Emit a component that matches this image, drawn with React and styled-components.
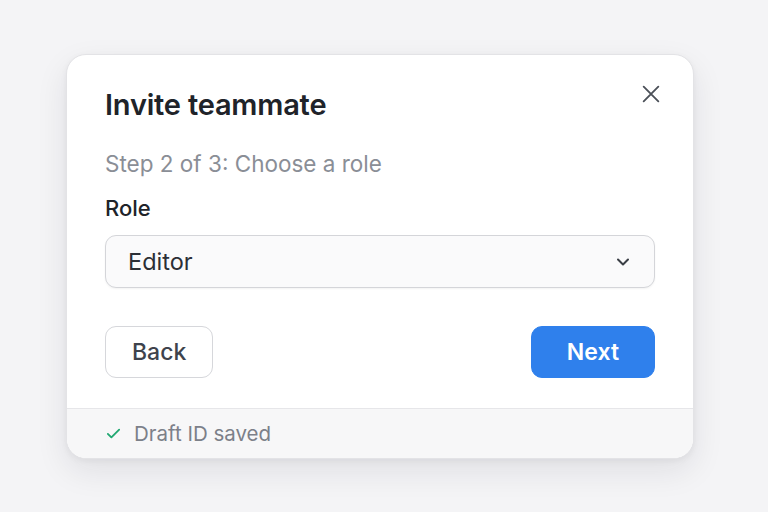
import styled, { createGlobalStyle } from "styled-components";

const GlobalStyle = createGlobalStyle`
  html, body {
    margin: 0;
    padding: 0;
    background: #f4f4f6;
    font-family: Inter, "Noto Sans", sans-serif;
  }
  * { box-sizing: border-box; }
`;

const Page = styled.div`
  width: 768px;
  height: 512px;
  display: flex;
  justify-content: flex-start;
  padding: 54px 0 0 66px;
`;

const Card = styled.div`
  width: 628px;
  height: 405px;
  background: #ffffff;
  border: 1px solid #e3e3e6;
  border-radius: 20px;
  box-shadow: 0 12px 32px rgba(20, 20, 40, 0.09), 0 2px 6px rgba(20, 20, 40, 0.05);
  display: flex;
  flex-direction: column;
  overflow: hidden;
`;

const Body = styled.div`
  flex: 1;
  padding: 31px 38px 0 38px;
  display: flex;
  flex-direction: column;
`;

const Header = styled.div`
  display: flex;
  justify-content: space-between;
  align-items: flex-start;
`;

const Title = styled.h1`
  margin: 0;
  font-size: 29px;
  font-weight: 600;
  color: #202329;
  letter-spacing: -0.2px;
  line-height: 38px;
`;

const CloseButton = styled.button`
  border: none;
  background: none;
  padding: 0;
  margin: -6px -10px 0 0;
  width: 28px;
  height: 28px;
  display: flex;
  align-items: center;
  justify-content: center;
  color: #4b5058;
  cursor: pointer;
`;

const Subtitle = styled.p`
  margin: 25px 0 0 0;
  font-size: 22.5px;
  color: #8a8e96;
  line-height: 30px;
`;

const Label = styled.div`
  margin-top: 14px;
  font-size: 22px;
  font-weight: 500;
  color: #202329;
  line-height: 30px;
`;

const Select = styled.div`
  margin-top: 12px;
  height: 53px;
  border: 1px solid #d4d5d9;
  border-radius: 11px;
  background: #fafafb;
  box-shadow: 0 1px 2px rgba(0, 0, 0, 0.05);
  display: flex;
  align-items: center;
  justify-content: space-between;
  padding: 0 21px 0 22px;
  font-size: 23.5px;
  color: #2b2f36;
`;

const Actions = styled.div`
  margin-top: 38px;
  display: flex;
  justify-content: space-between;
`;

const Button = styled.button`
  height: 52px;
  padding: 0 ${(p) => (p.$primary ? "35px" : "26px")};
  border-radius: 11px;
  font-family: Inter, "Noto Sans", sans-serif;
  font-size: 23px;
  font-weight: ${(p) => (p.$primary ? 600 : 500)};
  color: ${(p) => (p.$primary ? "#ffffff" : "#3e434c")};
  background: ${(p) => (p.$primary ? "#2f80ec" : "#ffffff")};
  border: 1px solid ${(p) => (p.$primary ? "#2f80ec" : "#d6d7db")};
  cursor: pointer;
`;

const Footer = styled.div`
  height: 50px;
  border-top: 1px solid #e6e6e9;
  background: #f7f7f8;
  display: flex;
  align-items: center;
  gap: 12px;
  padding: 0 38px;
  font-size: 20.5px;
  color: #7c8089;
`;

function ChevronDown() {
  return (
    <svg width="20" height="20" viewBox="0 0 24 24" fill="none" stroke="#3a3e45" strokeWidth="2.4" strokeLinecap="round" strokeLinejoin="round">
      <path d="M6 9l6 6 6-6" />
    </svg>
  );
}

function CloseIcon() {
  return (
    <svg width="22" height="22" viewBox="0 0 24 24" fill="none" stroke="currentColor" strokeWidth="2" strokeLinecap="round">
      <path d="M4 4l16 16M20 4L4 20" />
    </svg>
  );
}

function CheckIcon() {
  return (
    <svg width="17" height="17" viewBox="0 0 24 24" fill="none" stroke="#22a872" strokeWidth="2.6" strokeLinecap="round" strokeLinejoin="round">
      <path d="M4 12.5l5 5L20 6.5" />
    </svg>
  );
}

export default function App() {
  return (
    <>
      <GlobalStyle />
      <Page>
        <Card>
          <Body>
            <Header>
              <Title>Invite teammate</Title>
              <CloseButton aria-label="Close">
                <CloseIcon />
              </CloseButton>
            </Header>
            <Subtitle>Step 2 of 3: Choose a role</Subtitle>
            <Label>Role</Label>
            <Select>
              <span>Editor</span>
              <ChevronDown />
            </Select>
            <Actions>
              <Button>Back</Button>
              <Button $primary>Next</Button>
            </Actions>
          </Body>
          <Footer>
            <CheckIcon />
            <span>Draft ID saved</span>
          </Footer>
        </Card>
      </Page>
    </>
  );
}
